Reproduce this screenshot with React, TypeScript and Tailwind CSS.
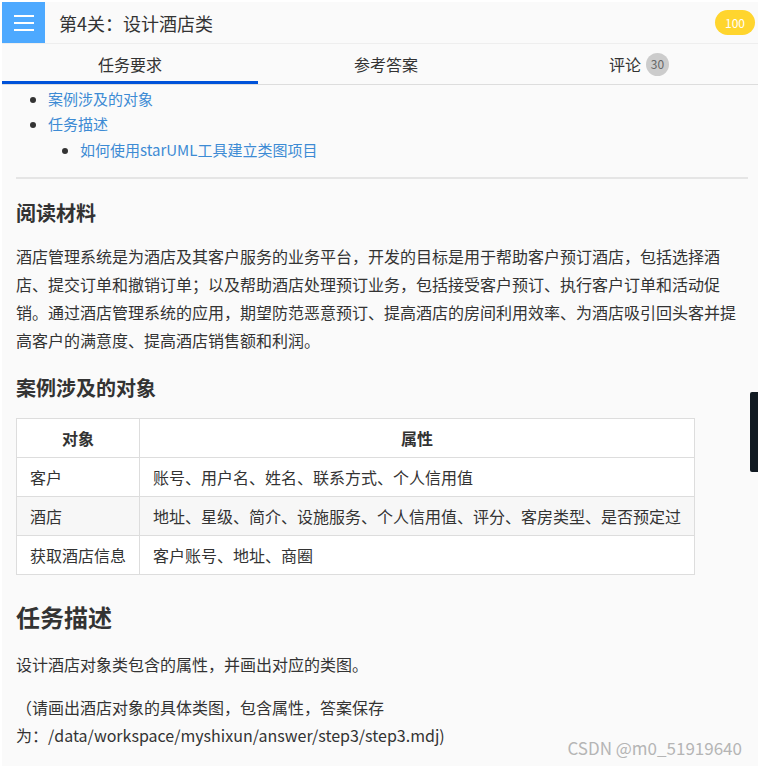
import React from "react";

const rows = [
    { name: "客户", attrs: "账号、用户名、姓名、联系方式、个人信用值", shade: false },
    { name: "酒店", attrs: "地址、星级、简介、设施服务、个人信用值、评分、客房类型、是否预定过", shade: true },
    { name: "获取酒店信息", attrs: "客户账号、地址、商圈", shade: false },
];

export default function App() {
    return (
        <div
            className="relative h-[766px] overflow-hidden bg-white pl-[2px] pt-[2px] text-[#333]"
            style={{ fontFamily: '"Noto Sans CJK SC", "Microsoft YaHei", sans-serif' }}
        >
            <div className="h-full bg-[#fafafa]">
                {/* header */}
                <div className="flex h-[42px] items-center border-b border-[#eee]">
                    <div className="flex h-[41px] w-[43px] flex-col items-center justify-center gap-[5px] bg-[#4da9ff]">
                        <span className="block h-[2px] w-[20px] bg-white" />
                        <span className="block h-[2px] w-[20px] bg-white" />
                        <span className="block h-[2px] w-[20px] bg-white" />
                    </div>
                    <h1 className="ml-[14px] text-[18px] leading-[24px] text-[#333]">
                        第4关：设计酒店类
                    </h1>
                    <span className="ml-auto mr-[3px] flex h-[25px] w-[40px] items-center justify-center rounded-full bg-[#ffd52e] text-[12px] text-white">
                        100
                    </span>
                </div>

                {/* tabs */}
                <div className="grid h-[41px] grid-cols-[256px_256px_1fr] border-b border-[#ddd] text-[16px]">
                    <div className="flex items-center justify-center border-b-[3px] border-[#0052d9] pt-[3px]">
                        任务要求
                    </div>
                    <div className="flex items-center justify-center">参考答案</div>
                    <div className="flex items-center justify-center gap-[5px] pl-[6px]">
                        评论
                        <span className="flex h-[23px] w-[23px] items-center justify-center rounded-full bg-[#ccc] text-[12px] text-[#666]">
                            30
                        </span>
                    </div>
                </div>

                <div className="pl-[14px] pr-[10px]">
                    {/* toc */}
                    <ul className="mt-[1px] list-disc pl-[32px] text-[15px] leading-[25px] text-[#3d8bd4] marker:text-[#333]">
                        <li>案例涉及的对象</li>
                        <li>
                            任务描述
                            <ul className="list-disc pl-[32px] pt-[1px]">
                                <li>如何使用starUML工具建立类图项目</li>
                            </ul>
                        </li>
                    </ul>

                    <hr className="mt-[15px] border-t-2 border-[#e5e5e5]" />

                    <h2 className="mt-[19px] text-[20px] font-bold leading-[30px]">阅读材料</h2>
                    <p className="mt-[14px] text-[16px] leading-[28px]">
                        酒店管理系统是为酒店及其客户服务的业务平台，开发的目标是用于帮助客户预订酒店，包括选择酒店、提交订单和撤销订单；以及帮助酒店处理预订业务，包括接受客户预订、执行客户订单和活动促销。通过酒店管理系统的应用，期望防范恶意预订、提高酒店的房间利用效率、为酒店吸引回头客并提高客户的满意度、提高酒店销售额和利润。
                    </p>

                    <h2 className="mt-[19px] text-[20px] font-bold leading-[30px]">案例涉及的对象</h2>
                    <table className="mt-[15px] border-collapse bg-white text-[16px]">
                        <thead>
                            <tr>
                                <th className="h-[39px] border border-[#ddd] px-[13px] text-center font-bold">
                                    对象
                                </th>
                                <th className="h-[39px] border border-[#ddd] px-[13px] text-center font-bold">
                                    属性
                                </th>
                            </tr>
                        </thead>
                        <tbody>
                            {rows.map((row) => (
                                <tr key={row.name} className={row.shade ? "bg-[#f7f7f7]" : "bg-white"}>
                                    <td className="h-[39px] border border-[#ddd] px-[13px]">{row.name}</td>
                                    <td className="h-[39px] border border-[#ddd] px-[13px]">{row.attrs}</td>
                                </tr>
                            ))}
                        </tbody>
                    </table>

                    <h2 className="mt-[24px] text-[24px] font-bold leading-[36px]">任务描述</h2>
                    <p className="mt-[15px] text-[16px] leading-[28px]">
                        设计酒店对象类包含的属性，并画出对应的类图。
                    </p>
                    <p className="mt-[15px] text-[16px] leading-[28px]">
                        （请画出酒店对象的具体类图，包含属性，答案保存
                        <br />
                        为：/data/workspace/myshixun/answer/step3/step3.mdj)
                    </p>
                </div>
            </div>

            {/* floating side handle */}
            <div className="absolute right-0 top-[392px] h-[80px] w-[8px] rounded-l-[2px] bg-[#111a22]" />

            {/* watermark */}
            <div className="absolute bottom-[6px] right-[16px] text-[17px] text-[#b5b5b5]">
                CSDN @m0_51919640
            </div>
        </div>
    );
}
